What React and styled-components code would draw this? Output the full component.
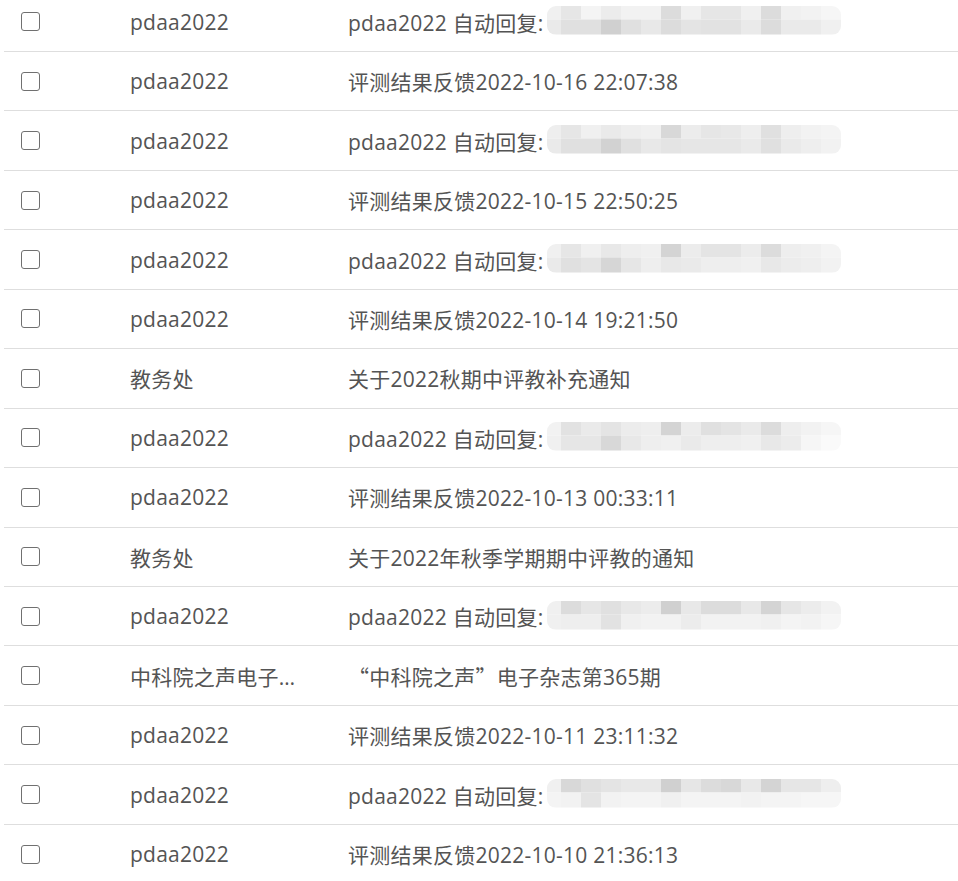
import React from "react";
import styled, { createGlobalStyle } from "styled-components";

const Global = createGlobalStyle`
  html, body { margin: 0; padding: 0; background: #fff; }
  body { overflow: hidden; }
`;

const Page = styled.div`
  width: 958px;
  height: 881px;
  overflow: hidden;
  font-family: "Open Sans", "Noto Sans CJK SC", sans-serif;
  font-size: 21px;
  letter-spacing: 0.25px;
  color: #545454;
`;

const List = styled.div`
  margin-top: -7.5px;
  padding-left: 4px;
  display: flex;
  flex-direction: column;
`;

const Row = styled.div`
  box-sizing: border-box;
  height: 59.46px;
  border-bottom: 1px solid #dedede;
  display: grid;
  grid-template-columns: 126px 218px 1fr;
  align-items: center;
`;

const CheckCell = styled.div`
  padding-left: 17px;
  display: flex;
  align-items: center;
`;

const Check = styled.span`
  box-sizing: border-box;
  width: 19px;
  height: 19px;
  border: 1.5px solid #707070;
  border-radius: 3px;
  background: #fff;
  display: block;
`;

const Name = styled.div`
  max-width: 168px;
  white-space: nowrap;
  overflow: hidden;
  text-overflow: ellipsis;
`;

const Subject = styled.div`
  white-space: nowrap;
  display: flex;
  align-items: center;
`;

const Punct = styled.span`
  font-family: "Noto Sans CJK SC", sans-serif;
`;

const MosaicBox = styled.svg`
  display: block;
  margin-left: 3px;
  margin-top: -2px;
  flex: none;
`;

const g = (v) => `#${v}${v}${v}`;

function Mosaic({ top, bottom }) {
  const widths = [14, ...Array(14).fill(20)];
  let x = 0;
  const cells = widths.map((w, i) => {
    const cx = x;
    x += w;
    return (
      <g key={i}>
        <rect x={cx} y={0} width={w} height={13.5} fill={g(top[i] || "f2")} />
        <rect x={cx} y={13.5} width={w} height={15} fill={g(bottom[i] || "f2")} />
      </g>
    );
  });
  return (
    <MosaicBox width="294" height="29" viewBox="0 0 294 29">
      <defs>
        <clipPath id="mclip">
          <rect x="0" y="0" width="294" height="29" rx="9" ry="9" />
        </clipPath>
      </defs>
      <g clipPath="url(#mclip)">{cells}</g>
    </MosaicBox>
  );
}

const M = {
  a: {
    top: ["f0", "e6", "f4", "ec", "f2", "f2", "dc", "f0", "e6", "e6", "f0", "dc", "f0", "f2", "f6"],
    bottom: ["ea", "e0", "e0", "d0", "e0", "e8", "dc", "e4", "e2", "e2", "ea", "dc", "ea", "ea", "f0"],
  },
  b: {
    top: ["ee", "e6", "f0", "ea", "ee", "f0", "d8", "ec", "e6", "e8", "ee", "e0", "ee", "f2", "f4"],
    bottom: ["ea", "e0", "e0", "d2", "e0", "e8", "e4", "e6", "e6", "e6", "ea", "e0", "ea", "ee", "f2"],
  },
  c: {
    top: ["f0", "e6", "f0", "e8", "ee", "f0", "d4", "ec", "e4", "e4", "ec", "dc", "ee", "f0", "f4"],
    bottom: ["ea", "e0", "e4", "d6", "e6", "ee", "e8", "ea", "ee", "ee", "f0", "e8", "ec", "ee", "f2"],
  },
  d: {
    top: ["f2", "e2", "ea", "e4", "ec", "ee", "d4", "ec", "e0", "e4", "ea", "dc", "ee", "f2", "f6"],
    bottom: ["f0", "e6", "e6", "d8", "e8", "ee", "f0", "ea", "ee", "ee", "f0", "e8", "ec", "f6", "fa"],
  },
  e: {
    top: ["f0", "dc", "e6", "e0", "e8", "ec", "d0", "e8", "dc", "dc", "e8", "d4", "e6", "ec", "f2"],
    bottom: ["f0", "ee", "ee", "e2", "f0", "f2", "f2", "ec", "f2", "f2", "f2", "f0", "f4", "f2", "f6"],
  },
  f: {
    top: ["f0", "d8", "e0", "e4", "e8", "e8", "d0", "e6", "dc", "d8", "e8", "d4", "e6", "e6", "ee"],
    bottom: ["f4", "f2", "e4", "f2", "f4", "f4", "f0", "f4", "f4", "f4", "f2", "f4", "f4", "f6", "f6"],
  },
};

const rows = [
  { name: "pdaa2022", auto: "a" },
  { name: "pdaa2022", subject: "评测结果反馈2022-10-16 22:07:38" },
  { name: "pdaa2022", auto: "b" },
  { name: "pdaa2022", subject: "评测结果反馈2022-10-15 22:50:25" },
  { name: "pdaa2022", auto: "c" },
  { name: "pdaa2022", subject: "评测结果反馈2022-10-14 19:21:50" },
  { name: "教务处", subject: "关于2022秋期中评教补充通知" },
  { name: "pdaa2022", auto: "d" },
  { name: "pdaa2022", subject: "评测结果反馈2022-10-13 00:33:11" },
  { name: "教务处", subject: "关于2022年秋季学期期中评教的通知" },
  { name: "pdaa2022", auto: "e" },
  { name: "中科院之声电子杂志", quoted: true },
  { name: "pdaa2022", subject: "评测结果反馈2022-10-11 23:11:32" },
  { name: "pdaa2022", auto: "f" },
  { name: "pdaa2022", subject: "评测结果反馈2022-10-10 21:36:13" },
];

export default function App() {
  return (
    <Page>
      <Global />
      <List>
        {rows.map((r, i) => (
          <Row key={i}>
            <CheckCell>
              <Check />
            </CheckCell>
            <Name>{r.name}</Name>
            <Subject>
              {r.auto ? (
                <>
                  pdaa2022 自动回复:
                  <Mosaic {...M[r.auto]} />
                </>
              ) : r.quoted ? (
                <>
                  <Punct>“</Punct>中科院之声<Punct>”</Punct>电子杂志第365期
                </>
              ) : (
                r.subject
              )}
            </Subject>
          </Row>
        ))}
      </List>
    </Page>
  );
}
